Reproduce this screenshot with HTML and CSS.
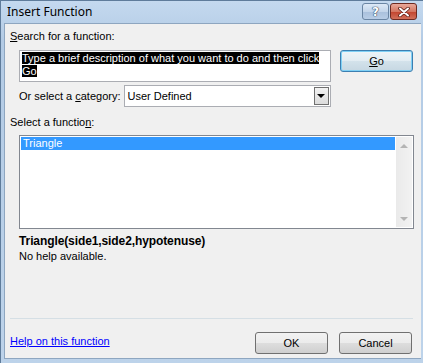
FILE: index.html
```html
<!DOCTYPE html>
<html lang="en">
<head>
<meta charset="UTF-8">
<title>Insert Function</title>
<link rel="stylesheet" href="styles.css">
</head>
<body>

<div class="window">
  <div class="titlebar">
    <span class="title">Insert Function</span>
    <div class="caption-buttons">
      <div class="cap-btn cap-help">?</div>
      <div class="cap-btn cap-close">
        <svg width="14" height="10" viewBox="0 0 14 10">
          <path d="M3 1.5 L11 8.5 M11 1.5 L3 8.5" stroke="#5a1d14" stroke-width="3.6" stroke-linecap="round"/>
          <path d="M3 1.5 L11 8.5 M11 1.5 L3 8.5" stroke="#ffffff" stroke-width="2" stroke-linecap="round"/>
        </svg>
      </div>
    </div>
  </div>

  <div class="client">
    <div class="label"><u>S</u>earch for a function:</div>
    <div class="search-row">
      <div class="search-box"><span class="selected">Type a brief description of what you want to do and then click Go</span></div>
      <button class="btn btn-default"><u>G</u>o</button>
    </div>

    <div class="category-row">
      <span class="label">Or select a <u>c</u>ategory:</span>
      <div class="combo">
        <span class="combo-text">User Defined</span>
        <div class="combo-arrow"></div>
      </div>
    </div>

    <div class="label func-label">Select a functio<u>n</u>:</div>
    <div class="listbox">
      <div class="list-items">
        <div class="list-item active">Triangle</div>
      </div>
      <div class="scrollbar">
        <span class="arrow-up"></span>
        <span class="arrow-down"></span>
      </div>
    </div>

    <div class="signature">Triangle(side1,side2,hypotenuse)</div>
    <div class="help-text">No help available.</div>

    <div class="separator"></div>

    <div class="bottom-row">
      <a href="#" class="help-link">Help on this function</a>
      <div class="buttons">
        <button class="btn">OK</button>
        <button class="btn">Cancel</button>
      </div>
    </div>
  </div>
</div>

</body>
</html>
```

FILE: styles.css
```css
/* Insert Function dialog */
body, html {
  margin: 0;
  padding: 0;
  font-family: "Liberation Sans", Arial, sans-serif;
  font-size: 11px;
  color: #000;
  background-color: #b9d1ea;
}
.window {
  width: 423px;
  height: 363px;
  box-sizing: border-box;
  display: flex;
  flex-direction: column;
  padding: 0 2px 4px 3px;
  background: linear-gradient(#c4d9ef, #b3cbe5 40px, #bdd3ea);
  border-left: 1px solid #5f7c9b;
  border-top: 1px solid #5f7c9b;
}
.titlebar {
  height: 22px;
  display: flex;
  align-items: center;
  justify-content: space-between;
}
.title {
  font-family: "Noto Sans", sans-serif;
  font-size: 12px;
  padding-left: 3px;
  margin-top: -2px;
}
.caption-buttons {
  display: flex;
  gap: 1px;
  align-self: flex-start;
  margin-top: 2px;
  margin-right: 4px;
}
.cap-btn {
  width: 27px;
  height: 17px;
  box-sizing: border-box;
  border: 1px solid #6a85a3;
  border-radius: 3px;
  display: flex;
  align-items: center;
  justify-content: center;
}
.cap-help {
  background: linear-gradient(#dde9f6, #c3d5ea 50%, #a9c0dc 51%, #b8cde6);
  color: #fff;
  font-family: "DejaVu Sans", sans-serif;
  font-weight: bold;
  font-size: 12px;
  text-shadow: 0 0 1px #2d4563, 0 0 1px #2d4563, 0 0 1px #2d4563;
}
.cap-close {
  border-color: #6d2a20;
  background: linear-gradient(#e9a99a, #d47762 50%, #c2432d 51%, #d1705a);
}
.client {
  flex: 1;
  background-color: #f0f0f0;
  border: 1px solid #8ea6c0;
  border-right: none;
  padding: 6px 2px 0 5px;
  display: flex;
  flex-direction: column;
}
.label {
  line-height: 13px;
}
.search-row {
  display: flex;
  align-items: flex-start;
  margin: 7px 0 0 9px;
}
.search-box {
  width: 312px;
  height: 32px;
  box-sizing: border-box;
  border: 1px solid #abadb3;
  background: #fff;
  padding: 1px 2px;
  line-height: 13px;
}
.selected {
  background: #000;
  color: #fff;
}
.btn {
  font-family: "Liberation Sans", Arial, sans-serif;
  font-size: 11px;
  width: 73px;
  height: 22px;
  padding: 0;
  border: 1px solid #707070;
  border-radius: 3px;
  background: linear-gradient(#f2f2f2, #ebebeb 50%, #dddddd 51%, #cfcfcf);
  color: #000;
}
.btn-default {
  margin-left: 9px;
  border-color: #3c7fb1;
  box-shadow: inset 0 0 0 1px #7fd0f5;
  background: linear-gradient(#edf4f8, #e2ecf2 50%, #d3e2eb 51%, #c6d7e2);
}
.category-row {
  display: flex;
  align-items: center;
  margin: 3px 0 0 9px;
}
.combo {
  margin-left: 3px;
  width: 207px;
  height: 22px;
  box-sizing: border-box;
  border: 1px solid #abadb3;
  background: #fff;
  display: flex;
  align-items: center;
  justify-content: space-between;
  padding: 1px 1px 1px 3px;
}
.combo-arrow {
  width: 15px;
  height: 18px;
  box-sizing: border-box;
  border: 1px solid #707070;
  background: linear-gradient(#f2f2f2, #dcdcdc);
  display: flex;
  align-items: center;
  justify-content: center;
}
.combo-arrow::after {
  content: "";
  border-left: 4px solid transparent;
  border-right: 4px solid transparent;
  border-top: 4px solid #000;
}
.func-label {
  margin-top: 9px;
}
.listbox {
  margin: 6px 0 0 9px;
  width: 395px;
  height: 94px;
  box-sizing: border-box;
  border: 1px solid #828790;
  background: #fff;
  display: flex;
}
.list-items {
  flex: 1;
  padding: 1px;
}
.list-item {
  line-height: 13px;
  padding-left: 2px;
}
.list-item.active {
  background: #3399ff;
  color: #fff;
}
.scrollbar {
  width: 16px;
  margin: 1px 1px 1px 0;
  background: linear-gradient(90deg, #eaeaea, #f2f2f2);
  display: flex;
  flex-direction: column;
  justify-content: space-between;
  align-items: center;
  padding: 7px 0 6px;
  box-sizing: border-box;
}
.arrow-up {
  border-left: 4px solid transparent;
  border-right: 4px solid transparent;
  border-bottom: 4px solid #b4b4b4;
}
.arrow-down {
  border-left: 4px solid transparent;
  border-right: 4px solid transparent;
  border-top: 4px solid #b4b4b4;
}
.signature {
  margin: 5px 0 0 9px;
  font-weight: bold;
  font-size: 12px;
  line-height: 14px;
  letter-spacing: -0.1px;
}
.help-text {
  margin-left: 9px;
  line-height: 14px;
  margin-top: 1px;
}
.separator {
  margin-top: 55px;
  margin-right: 6px;
  height: 1px;
  background: #d5dfe5;
}
.bottom-row {
  display: flex;
  justify-content: space-between;
  align-items: center;
  margin-top: 13px;
  margin-right: 6px;
}
.help-link {
  color: #0000ff;
  text-decoration: underline;
  margin-top: -4px;
}
.buttons {
  display: flex;
  gap: 11px;
  margin-right: 1px;
}
```
